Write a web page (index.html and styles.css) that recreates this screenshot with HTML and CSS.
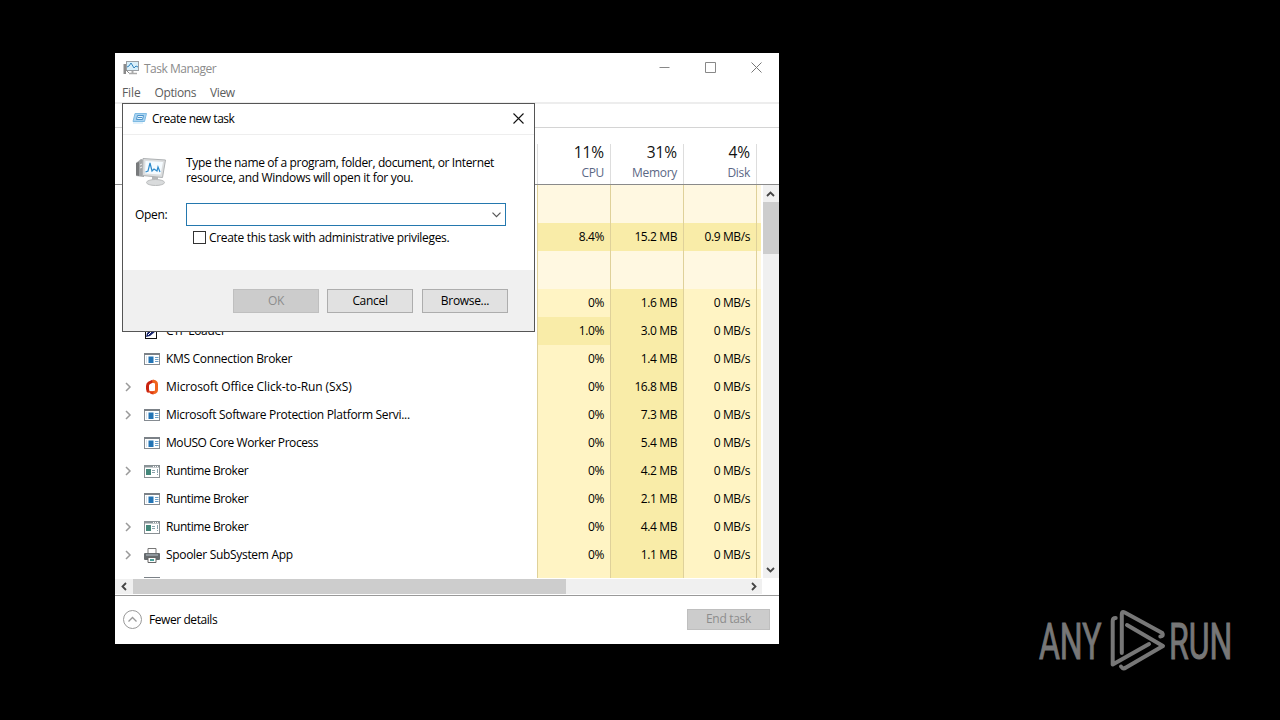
FILE: index.html
```html
<!DOCTYPE html>
<html lang="en">
<head>
  <meta charset="UTF-8">
  <meta name="viewport" content="width=device-width, initial-scale=1.0">
  <title>Task Manager</title>
  <link rel="stylesheet" href="styles.css">
</head>
<body>
  <!-- Shared icons -->
  <svg class="icon-defs" width="0" height="0">
    <symbol id="icon-app" viewBox="0 0 16 12">
      <rect x="0.5" y="0.5" width="15" height="11" fill="#fff" stroke="#858b91"/>
      <path d="M0 1h16" stroke="#7b8187" stroke-width="2"/>
      <rect x="2" y="3" width="1" height="7" fill="#dde5ec"/>
      <rect x="4.5" y="3.5" width="5" height="6.5" fill="#2374b5"/>
      <path d="M11 4.5h3.5M11 6.5h3.5M11 8.5h3.5" stroke="#6da0c9"/>
    </symbol>
    <symbol id="icon-broker" viewBox="0 0 16 13">
      <rect x="0.5" y="0.5" width="15" height="12" fill="#fff" stroke="#8a9094"/>
      <path d="M1 1.5h14" stroke="#8b9499" stroke-width="2"/>
      <path d="M9 1.5h6" stroke="#fff" stroke-dasharray="1 1"/>
      <rect x="2" y="4" width="5" height="6" fill="#44877a"/>
      <path d="M8 5.5h3M8 7.5h3M13.5 4v4M13.5 9v1" stroke="#8aa3ad"/>
    </symbol>
    <symbol id="chevron" viewBox="0 0 8 10">
      <path d="M2 1l4 4-4 4" fill="none" stroke="#9a9a9a" stroke-width="1.5"/>
    </symbol>
  </svg>

  <div class="window">
    <div class="titlebar">
      <svg class="tm-icon" width="17" height="15" viewBox="0 0 17 15">
        <path d="M0.500 4h2.500v10H0.500z" fill="#8a8a8a"/>
        <rect x="3.500" y="1.500" width="12" height="9" fill="#d8effa" stroke="#9a9fa4"/>
        <path d="M4 7l2-1 2-3 3 5 2-2 2 1" fill="none" stroke="#3283bd"/>
        <path d="M9.500 11v2" stroke="#aaa" stroke-width="2"/>
        <path d="M6 13.500h8" stroke="#aaa" stroke-width="1.500"/>
        <path d="M3 10l3 3" stroke="#8a8a8a"/>
      </svg>
      <span class="title">Task Manager</span>
      <div class="window-buttons">
        <svg width="11" height="11" viewBox="0 0 11 11"><path d="M0.500 5.500h10" stroke="#888"/></svg>
        <svg width="11" height="11" viewBox="0 0 11 11"><path d="M0.500 0.500h10v10h-10z" fill="none" stroke="#888"/></svg>
        <svg width="11" height="11" viewBox="0 0 11 11"><path d="M0.500 0.500l10 10M10.500 0.500l-10 10" stroke="#777"/></svg>
      </div>
    </div>
    <div class="menubar">
      <span class="menu-file">File</span>
      <span class="menu-options">Options</span>
      <span class="menu-view">View</span>
    </div>
    <div class="tabs"></div>

    <div class="table-header">
      <div class="col-name"></div>
      <div class="head-cell"><b>11%</b><span>CPU</span></div>
      <div class="head-cell"><b>31%</b><span>Memory</span></div>
      <div class="head-cell"><b>4%</b><span>Disk</span></div>
      <div class="head-cell"></div>
    </div>

    <div class="table-body">
      <div class="rows">
        <div class="row group"><div class="name"></div><div class="cell"></div><div class="cell"></div><div class="cell"></div><div class="cell"></div></div>
        <div class="row"><div class="name"></div><div class="cell high">8.4%</div><div class="cell high">15.2 MB</div><div class="cell high">0.9 MB/s</div><div class="cell high"></div></div>
        <div class="row group"><div class="name"></div><div class="cell"></div><div class="cell"></div><div class="cell"></div><div class="cell"></div></div>
        <div class="row"><div class="name"></div><div class="cell">0%</div><div class="cell high">1.6 MB</div><div class="cell">0 MB/s</div><div class="cell"></div></div>
        <div class="row">
          <div class="name">
            <span class="arrow"></span>
            <span class="icon ctf"><svg width="12" height="14" viewBox="0 0 12 14"><rect x="0.500" y="0.500" width="11" height="13" fill="#fff" stroke="#111"/><path d="M1 12l1-4 7-6h2v4l-6 5z" fill="#17246b"/><path d="M3 10l6-6" stroke="#fff"/></svg></span>
            <span class="label">CTF Loader</span>
          </div>
          <div class="cell high">1.0%</div><div class="cell high">3.0 MB</div><div class="cell">0 MB/s</div><div class="cell"></div>
        </div>
        <div class="row">
          <div class="name"><span class="arrow"></span><span class="icon"><svg width="16" height="12"><use href="#icon-app"/></svg></span><span class="label">KMS Connection Broker</span></div>
          <div class="cell">0%</div><div class="cell high">1.4 MB</div><div class="cell">0 MB/s</div><div class="cell"></div>
        </div>
        <div class="row">
          <div class="name">
            <span class="arrow"><svg width="8" height="10"><use href="#chevron"/></svg></span>
            <span class="icon"><svg width="14" height="16" viewBox="0 0 14 16"><path d="M8 2L4 4Q2.500 5 2.500 7v3q0 2 1.500 2.500" fill="none" stroke="#c9230f" stroke-width="3"/><path d="M7.500 2l3 1q1 0.500 1 2v6q0 1.500-1 2l-2.500 0.700" fill="none" stroke="#f0641e" stroke-width="3"/><path d="M3 12l5.500 0.300V15.500q-3 0-5.500-3.500z" fill="#e03c10"/></svg></span>
            <span class="label wide">Microsoft Office Click-to-Run (SxS)</span>
          </div>
          <div class="cell">0%</div><div class="cell high">16.8 MB</div><div class="cell">0 MB/s</div><div class="cell"></div>
        </div>
        <div class="row">
          <div class="name"><span class="arrow"><svg width="8" height="10"><use href="#chevron"/></svg></span><span class="icon"><svg width="16" height="12"><use href="#icon-app"/></svg></span><span class="label">Microsoft Software Protection Platform Servi...</span></div>
          <div class="cell">0%</div><div class="cell high">7.3 MB</div><div class="cell">0 MB/s</div><div class="cell"></div>
        </div>
        <div class="row">
          <div class="name"><span class="arrow"></span><span class="icon"><svg width="16" height="12"><use href="#icon-app"/></svg></span><span class="label tight">MoUSO Core Worker Process</span></div>
          <div class="cell">0%</div><div class="cell high">5.4 MB</div><div class="cell">0 MB/s</div><div class="cell"></div>
        </div>
        <div class="row">
          <div class="name"><span class="arrow"><svg width="8" height="10"><use href="#chevron"/></svg></span><span class="icon"><svg width="16" height="13"><use href="#icon-broker"/></svg></span><span class="label tight">Runtime Broker</span></div>
          <div class="cell">0%</div><div class="cell high">4.2 MB</div><div class="cell">0 MB/s</div><div class="cell"></div>
        </div>
        <div class="row">
          <div class="name"><span class="arrow"></span><span class="icon"><svg width="16" height="12"><use href="#icon-app"/></svg></span><span class="label tight">Runtime Broker</span></div>
          <div class="cell">0%</div><div class="cell high">2.1 MB</div><div class="cell">0 MB/s</div><div class="cell"></div>
        </div>
        <div class="row">
          <div class="name"><span class="arrow"><svg width="8" height="10"><use href="#chevron"/></svg></span><span class="icon"><svg width="16" height="13"><use href="#icon-broker"/></svg></span><span class="label tight">Runtime Broker</span></div>
          <div class="cell">0%</div><div class="cell high">4.4 MB</div><div class="cell">0 MB/s</div><div class="cell"></div>
        </div>
        <div class="row">
          <div class="name">
            <span class="arrow"><svg width="8" height="10"><use href="#chevron"/></svg></span>
            <span class="icon"><svg width="16" height="15" viewBox="0 0 16 15"><path d="M4 0.500h8v5H4z" fill="#fff" stroke="#777"/><rect x="0" y="5" width="16" height="7" rx="1" fill="#666b6e"/><path d="M2 7h12" stroke="#b8c4ca"/><path d="M4 9.500h8v5H4z" fill="#fff" stroke="#666"/><path d="M6 12h4" stroke="#4aa19a" stroke-width="2"/></svg></span>
            <span class="label">Spooler SubSystem App</span>
          </div>
          <div class="cell">0%</div><div class="cell high">1.1 MB</div><div class="cell">0 MB/s</div><div class="cell"></div>
        </div>
        <div class="row">
          <div class="name"><span class="arrow"></span><span class="icon"><svg width="16" height="12"><use href="#icon-app"/></svg></span></div>
          <div class="cell"></div><div class="cell high"></div><div class="cell"></div><div class="cell"></div>
        </div>
      </div>
      <div class="vscroll">
        <svg width="16" height="17" viewBox="0 0 16 17"><path d="M4 11l3.500-3.500L11 11" fill="none" stroke="#444" stroke-width="1.800"/></svg>
        <div class="vthumb"></div>
        <svg class="down" width="16" height="17" viewBox="0 0 16 17"><path d="M4 7l3.500 3.500L11 7" fill="none" stroke="#444" stroke-width="1.800"/></svg>
      </div>
    </div>

    <div class="hscroll">
      <svg width="18" height="15" viewBox="0 0 18 15"><path d="M11 4L7.500 7.500 11 11" fill="none" stroke="#444" stroke-width="1.800"/></svg>
      <div class="hthumb"></div>
      <svg class="right" width="18" height="15" viewBox="0 0 18 15"><path d="M8 4l3.500 3.500L8 11" fill="none" stroke="#444" stroke-width="1.800"/></svg>
    </div>

    <div class="footer">
      <svg width="19" height="19" viewBox="0 0 19 19"><circle cx="9.500" cy="9.500" r="9" fill="#fff" stroke="#999"/><path d="M5.500 11.500l4-4 4 4" fill="none" stroke="#999" stroke-width="1.300"/></svg>
      <span class="fewer">Fewer details</span>
      <button class="end-task" disabled>End task</button>
    </div>
  </div>

  <!-- Create new task dialog -->
  <div class="dialog">
    <div class="dialog-title">
      <svg width="15" height="12" viewBox="0 0 15 12"><path d="M3 1.500h11.500l-2 8H1z" fill="#a9d3f1" stroke="#7fbbe3"/><path d="M1 11h10" stroke="#c4e3f7" fill="none"/><path d="M5.500 3.500h6l-1 4h-6z" fill="#e5f4ff" stroke="#4d95cb"/><path d="M6 5.500h4" stroke="#4d95cb"/></svg>
      <span>Create new task</span>
      <svg class="dialog-close" width="11" height="11" viewBox="0 0 11 11"><path d="M0.500 0.500l10 10M10.500 0.500l-10 10" stroke="#111" stroke-width="1.100"/></svg>
    </div>
    <div class="dialog-body">
      <div class="intro">
        <svg width="32" height="30" viewBox="0 0 32 30">
          <path d="M1 6l5-4 3 1v17l-8-1z" fill="#a2a5a7"/>
          <path d="M1 6l3-1v14l-3-1z" fill="#77797b"/>
          <path d="M5 8l2-1M5 11l2-1" stroke="#eee"/>
          <path d="M8 1.500l22.500 1.500-3 17.500-20-2z" fill="#dcdedf" stroke="#aeb1b3"/>
          <path d="M10.500 4l17.500 1-2.500 12.500-15.500-1z" fill="#f5fbff"/>
          <path d="M10.500 15l2.500-1 2-8 2 8 2-2 3 2 1-4 2 5" fill="none" stroke="#308ccc" stroke-width="1.200"/>
          <path d="M17 20h6v5h-6z" fill="#b4b6b7"/>
          <ellipse cx="20.500" cy="25.500" rx="9" ry="3" fill="#d9dbdc" stroke="#b9bbbc"/>
        </svg>
        <p>Type the name of a program, folder, document, or Internet<br><span class="line2">resource, and Windows will open it for you.</span></p>
      </div>
      <div class="open-row">
        <label>Open:</label>
        <div class="combo"><svg width="9" height="6" viewBox="0 0 9 6"><path d="M0.500 0.700l4 4 4-4" fill="none" stroke="#555" stroke-width="1.200"/></svg></div>
      </div>
      <div class="check-row">
        <span class="checkbox"></span>
        <span>Create this task with administrative privileges.</span>
      </div>
    </div>
    <div class="dialog-footer">
      <button disabled>OK</button>
      <button>Cancel</button>
      <button class="browse">Browse...</button>
    </div>
  </div>

  <!-- Watermark -->
  <svg class="watermark" width="210" height="66" viewBox="0 0 210 66">
    <g class="wm-text">
      <text transform="translate(2 51) scale(0.64 1)">ANY</text>
      <text transform="translate(132 51) scale(0.64 1)">RUN</text>
    </g>
    <g fill="none" stroke="#777" stroke-width="4" stroke-linecap="round" stroke-linejoin="round">
      <path d="M84.800 45V6q0-3 3-1.500l37.500 20.500q2 3-2 3.500"/>
      <path d="M90 17l36 21-37 21.500q-3 2-5-1"/>
      <path d="M112 36L75.700 56.500V13q0-3 3-3"/>
    </g>
  </svg>
</body>
</html>
```
FILE: styles.css
```css
* {
  box-sizing: border-box;
}

body {
  margin: 0;
  width: 1280px;
  height: 720px;
  overflow: hidden;
  background: #000;
  font-family: "Open Sans", "Noto Sans", sans-serif;
  font-size: 12px;
  letter-spacing: -0.31px;
  color: #000;
}

svg {
  display: block;
  flex-shrink: 0;
}

.icon-defs {
  position: absolute;
}

/* Task Manager window */
.window {
  position: absolute;
  left: 115px;
  top: 53px;
  width: 664px;
  height: 591px;
  background: #fff;
  display: flex;
  flex-direction: column;
}

.titlebar {
  display: flex;
  align-items: center;
  height: 29px;
  padding: 0 17px 0 8px;
  color: #8c8c8c;
}

.title {
  margin: 1px 0 0 4px;
  letter-spacing: -0.5px;
}

.window-buttons {
  display: flex;
  gap: 35px;
  margin-left: auto;
}

.menubar {
  display: flex;
  align-items: center;
  height: 20px;
  padding: 1px 0 0 7px;
  gap: 14px;
  color: #5c5c5c;
}

.menu-file {
  letter-spacing: -0.1px;
}

.menu-options,
.menu-view {
  letter-spacing: -0.4px;
}

.tabs {
  height: 26px;
  border-top: 2px solid #ededed;
  border-bottom: 1px solid #d4d4d4;
}

.table-header {
  display: grid;
  grid-template-columns: 422px 73px 73px 73px 1fr;
  height: 57px;
  padding-top: 16px;
  border-bottom: 1px solid #8a8a8a;
}

.head-cell {
  display: flex;
  flex-direction: column;
  align-items: flex-end;
  padding-right: 6px;
  border-left: 1px solid #ddd;
  color: #5b6785;
}

.head-cell b {
  font-size: 15.5px;
  font-weight: normal;
  line-height: 20px;
  letter-spacing: -0.1px;
  margin-top: -2px;
  color: #111;
}

.head-cell span {
  margin-top: 1px;
  line-height: 20px;
}

.table-body {
  display: flex;
  height: 393px;
  flex-shrink: 0;
  overflow: hidden;
}

.rows {
  width: 646px;
}

.row {
  display: grid;
  grid-template-columns: 422px 73px 73px 73px 5px;
  height: 28px;
}

.row.group {
  height: 38px;
}

.name {
  display: flex;
  align-items: center;
  padding-left: 8px;
}

.arrow {
  width: 20px;
}

.arrow svg {
  margin-left: 1px;
}

.icon {
  display: flex;
  justify-content: center;
  width: 18px;
}

.icon.ctf {
  padding: 1px 3px 0 0;
}

.label {
  margin-left: 5px;
  line-height: 28px;
  white-space: nowrap;
}

.label.tight {
  letter-spacing: -0.43px;
}

.label.wide {
  letter-spacing: -0.09px;
}

.cell {
  padding-right: 6px;
  border-left: 1px solid #dfd19a;
  background: #fff4c4;
  line-height: 28px;
  letter-spacing: -0.4px;
  text-align: right;
  white-space: nowrap;
}

.cell.high {
  background: #f9eca8;
}

.group .cell {
  background: #fff8e1;
}

.cell:last-child {
  padding: 0;
}

/* Scrollbars */
.vscroll {
  display: flex;
  flex-direction: column;
  width: 16px;
  margin-left: 2px;
  background: #f0f0f0;
}

.vthumb {
  height: 52px;
  background: #cdcdcd;
}

.down {
  margin-top: auto;
}

.hscroll {
  display: flex;
  width: 647px;
  height: 15px;
  margin-top: 1px;
  background: #f0f0f0;
}

.hthumb {
  width: 433px;
  background: #cdcdcd;
}

.right {
  margin-left: auto;
}

.footer {
  display: flex;
  align-items: center;
  height: 49px;
  margin-top: 1px;
  padding: 0 9px 2px 8px;
  border-top: 1px solid #999;
}

.fewer {
  margin-left: 7px;
  letter-spacing: -0.43px;
}

button {
  width: 86px;
  height: 24px;
  padding: 0 0 1px;
  border: 1px solid #adadad;
  background: #e1e1e1;
  color: #000;
  font: inherit;
  letter-spacing: inherit;
}

button:disabled {
  border-color: #bfbfbf;
  background: #ccc;
  color: #8c8c8c;
}

.end-task {
  width: 83px;
  height: 21px;
  margin-left: auto;
}

/* Dialog */
.dialog {
  position: absolute;
  left: 122px;
  top: 103px;
  width: 413px;
  height: 229px;
  display: flex;
  flex-direction: column;
  border: 1px solid #555;
  background: #fff;
}

.dialog-title {
  display: flex;
  align-items: center;
  height: 31px;
  padding: 0 10px 2px 9px;
  border-bottom: 1px solid #eee;
}

.dialog-title span {
  margin-left: 5px;
  letter-spacing: -0.47px;
}

.dialog-close {
  margin-left: auto;
}

.dialog-body {
  height: 135px;
  padding: 20px 28px 0 12px;
}

.intro {
  display: flex;
  height: 48px;
}

.intro svg {
  margin-top: 2px;
}

.intro p {
  margin: 0 0 0 19px;
  line-height: 15px;
  letter-spacing: -0.36px;
  white-space: nowrap;
}

.line2 {
  letter-spacing: -0.32px;
}

.open-row {
  display: flex;
  align-items: center;
  height: 23px;
}

.open-row label {
  width: 51px;
}

.combo {
  display: flex;
  align-items: center;
  justify-content: flex-end;
  width: 320px;
  height: 23px;
  padding-right: 4px;
  border: 1px solid #2478ae;
}

.check-row {
  display: flex;
  align-items: center;
  height: 22px;
  padding-left: 58px;
  letter-spacing: -0.33px;
}

.checkbox {
  width: 13px;
  height: 13px;
  margin-right: 3px;
  border: 1px solid #333;
}

.dialog-footer {
  display: flex;
  justify-content: flex-end;
  gap: 8px;
  flex: 1;
  padding: 19px 26px 0 0;
  background: #f0f0f0;
}

.browse {
  margin-left: 1px;
}

/* Watermark */
.watermark {
  position: absolute;
  left: 1037px;
  top: 608px;
}

.wm-text {
  font-family: "Roboto", sans-serif;
  font-size: 50px;
  letter-spacing: 0;
  fill: #777;
  stroke: #777;
  stroke-width: 1px;
}
```
